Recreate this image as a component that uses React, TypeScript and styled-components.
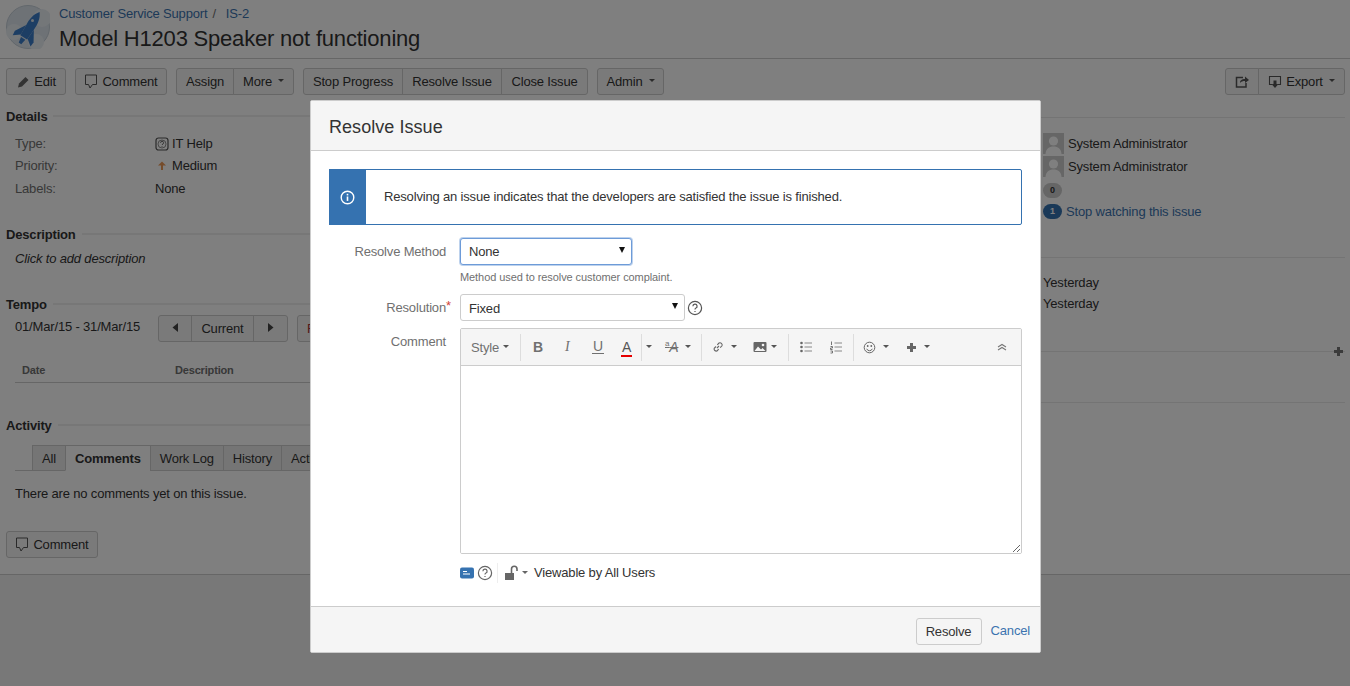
import React from "react";
import styled, { createGlobalStyle } from "styled-components";

const Global = createGlobalStyle`
  html, body { margin: 0; padding: 0; height: 686px; overflow: hidden; background: #fff; }
  body { font-family: "Liberation Sans", Arial, sans-serif; font-size: 13px; color: #333; letter-spacing: -0.17px; }
  * { box-sizing: border-box; }
  button, select, textarea { letter-spacing: inherit; }
`;

const Page = styled.div`position: relative; width: 1350px; height: 686px; overflow: hidden; background: #f0f0f0;`;
const Surface = styled.div`background: #fff; height: 575px; border-bottom: 1px solid #ccc;`;
const Header = styled.header`display: flex; align-items: flex-start; gap: 9px; height: 59px; padding: 5px 6px 0; border-bottom: 1px solid #ccc;`;
const HeaderText = styled.div`display: flex; flex-direction: column; min-width: 0;`;
const Crumbs = styled.div`display: flex; line-height: 17px; color: #707070;`;
const Crumb = styled.a`color: #3b73af;`;
const CrumbSep = styled.span`margin: 0 10px 0 5px;`;
const Title = styled.h1`margin: 2px 0 0; font-size: 22px; font-weight: 400; line-height: 30px; color: #333; letter-spacing: -0.2px;`;

const Toolbar = styled.div`display: flex; gap: 9px; padding: 9px 5px 0 6px;`;
const Spacer = styled.div`flex: 1;`;
const Group = styled.div`display: flex;`;
const Btn = styled.button<{ $w: number }>`
  display: flex; align-items: center; justify-content: center; gap: 4px;
  width: ${(p) => p.$w}px; height: 27px; padding: 0; margin-left: -1px; background: #f5f5f5; border: 1px solid #ccc;
  color: #333; font: 13px "Liberation Sans", sans-serif; white-space: nowrap;
  &:first-child { margin-left: 0; border-radius: 3px 0 0 3px; }
  &:last-child { border-radius: 0 3px 3px 0; }
  &:only-child { border-radius: 3px; }
`;
const Caret = styled.span`display: inline-block; width: 0; height: 0; margin-left: 2px; margin-top: -2px; border: 3px solid transparent; border-top-color: ${(p: { $c?: string }) => p.$c ?? "#555"}; border-bottom-width: 0;`;

const Columns = styled.div`display: grid; grid-template-columns: 1035px 315px;`;
const Main = styled.main`padding: 11px 0 0 6px; min-width: 0;`;
const Side = styled.aside`padding: 22px 5px 0 0;`;
const HeadRow = styled.div<{ $top?: number }>`display: flex; align-items: center; gap: 6px; height: 20px; margin-top: ${(p) => p.$top ?? 0}px;`;
const Heading = styled.h4`margin: 0; font-size: 13px; font-weight: 700; color: #333;`;
const HeadRule = styled.div`flex: 1; height: 2px; background: #eee;`;
const Rows = styled.dl`margin: 6.6px 0 0 9px; height: 67.9px;`;
const Row = styled.div`display: flex; height: 22.5px; line-height: 22px; color: #333;`;
const Term = styled.dt`width: 140px; color: #707070;`;
const Val = styled.dd`margin: 0; display: flex; align-items: center; gap: 3px;`;
const NoteLine = styled.div`margin: 7px 0 0 9px; font-style: italic; line-height: 16px;`;
const TempoRow = styled.div`display: flex; align-items: flex-start; margin: 1px 0 0 9px;`;
const DateText = styled.div`width: 143px; line-height: 22px; color: #333; margin-top: 1px;`;
const TempoNext = styled.button`margin-left: 9px; width: 90px; height: 27px; background: #f5f5f5; border: 1px solid #ccc; border-radius: 3px; color: #a33; font: 13px "Liberation Sans", sans-serif; text-align: left; padding-left: 9px;`;
const TableHead = styled.div`display: flex; margin: 14px 0 0 9px; padding-left: 7px; height: 27px; border-bottom: 1px solid #ccc; font-size: 11px; font-weight: 700; color: #707070; line-height: 28px;`;
const ColDate = styled.span`width: 153px;`;
const Tabs = styled.div`display: flex; align-items: flex-end; margin: 10px 0 0 9px; padding-left: 18px; height: 26px; border-bottom: 1px solid #ccc;`;
const Tab = styled.div<{ $on?: boolean }>`
  height: 26px; margin-bottom: -1px; padding: 0 9px; line-height: 26px; white-space: nowrap; border: 1px solid #ccc; margin-left: -1px;
  background: ${(p) => (p.$on ? "#fff" : "#ebebeb")}; font-weight: ${(p) => (p.$on ? 700 : 400)}; border-bottom-color: ${(p) => (p.$on ? "#fff" : "#ccc")};
`;
const Para = styled.p`margin: 14px 0 0 9px; line-height: 17px;`;
const BottomBtn = styled(Group)`margin-top: 29px;`;

const SideRule = styled.div<{ $top: number }>`height: 1px; background: #e8e8e8; margin-top: ${(p) => p.$top}px; position: relative;`;
const SideBody = styled.div`padding: 15px 0 0 8px;`;
const Person = styled.div`display: flex; align-items: center; gap: 4px; height: 21px; margin-bottom: 2px;`;
const BadgeRow = styled.div<{ $top: number }>`display: flex; align-items: center; gap: 4px; height: 15px; margin-top: ${(p) => p.$top}px;`;
const Badge = styled.span<{ $on?: boolean }>`
  display: inline-block; width: 19px; height: 15px; border-radius: 8px; text-align: center; font-size: 9px; font-weight: 700; line-height: 15px;
  background: ${(p) => (p.$on ? "#3572b0" : "#ccc")}; color: ${(p) => (p.$on ? "#fff" : "#333")};
`;
const SideLink = styled.a`color: #3b73af;`;
const DateList = styled.div`padding: 14px 0 0 8px;`;
const DateLine = styled.div`height: 21px; line-height: 21px;`;
const PlusMark = styled.span`position: absolute; right: 1px; top: -5px; display: flex;`;

const Overlay = styled.div`position: absolute; inset: 0; background: rgba(0, 0, 0, 0.5);`;
const Dialog = styled.div`position: absolute; left: 310px; top: 100px; width: 731px; height: 553px; display: flex; flex-direction: column; background: #fff; border: 1px solid #ccc; border-radius: 2px; overflow: hidden; color: #333;`;
const DialogHead = styled.div`height: 50px; flex: none; background: #f5f5f5; border-bottom: 1px solid #ccc; padding: 0 18px; display: flex; align-items: center;`;
const DialogTitle = styled.h2`margin: 0; font-size: 18px; font-weight: 400; color: #333; position: relative; top: 2px; letter-spacing: 0.05px;`;
const DialogBody = styled.div`flex: 1; padding: 18px 18px 0;`;
const Notice = styled.div`display: flex; align-items: stretch; height: 56px; border: 1px solid #3572b0; border-radius: 2px;`;
const NoticeIcon = styled.div`width: 37px; margin: -1px 0 -1px -1px; background: #3572b0; display: flex; align-items: center; justify-content: center;`;
const NoticeText = styled.div`margin-left: 18px; line-height: 54px;`;
const FormRow = styled.div<{ $top: number }>`display: grid; grid-template-columns: 117px 1fr; column-gap: 14px; margin-top: ${(p) => p.$top}px;`;
const Label = styled.label<{ $top: number }>`text-align: right; color: #707070; line-height: 17px; padding-top: ${(p) => p.$top}px; white-space: nowrap;`;
const ReqWrap = styled.span`position: relative;`;
const Req = styled.span`color: #d04437; font-size: 13px; line-height: 13px; position: absolute; left: 100%; top: -1px;`;
const SelectWrap = styled.span<{ $w: number }>`
  position: relative; display: block; width: ${(p) => p.$w}px; height: 27px;
  &::after { content: ""; position: absolute; right: 7px; top: 9px; border: 3.5px solid transparent; border-top: 6px solid #111; border-bottom-width: 0; pointer-events: none; }
`;
const Select = styled.select<{ $focus?: boolean }>`
  appearance: none; display: block; width: 100%; height: 27px; padding: ${(p) => (p.$focus ? "0 8px" : "1px 8px 0")}; background: #fff; color: #333; font: 13px "Liberation Sans", sans-serif; border-radius: 3px; outline: 0;
  border: 1px solid ${(p) => (p.$focus ? "#6d9bd8" : "#ccc")};
  box-shadow: ${(p) => (p.$focus ? "0 0 0 1px rgba(109,155,216,.45)" : "none")};
`;
const Hint = styled.div`font-size: 11px; color: #707070; margin-top: 6px; line-height: 13px; letter-spacing: -0.08px;`;
const FieldLine = styled.div`display: flex; align-items: center; gap: 2px;`;
const Editor = styled.div`border: 1px solid #ccc; border-radius: 2px; overflow: hidden; display: flex; flex-direction: column; height: 226px;`;
const EdTools = styled.div`height: 37px; flex: none; background: #f5f5f5; border-bottom: 1px solid #ccc; position: relative;`;
const EdSep = styled.span<{ $l: number }>`position: absolute; left: ${(p) => p.$l}px; top: 5px; width: 1px; height: 27px; background: #ddd;`;
const EdItem = styled.span<{ $l: number; $gap?: number }>`position: absolute; left: ${(p) => p.$l}px; top: 0; height: 36px; display: flex; align-items: center; gap: ${(p) => p.$gap ?? 5}px; color: #707070;`;
const EdBold = styled.span`font: 700 14px "Liberation Sans", sans-serif;`;
const EdItalic = styled.span`font: italic 14px "Liberation Serif", serif;`;
const EdUnder = styled.span`font: 14px "Liberation Sans", sans-serif; border-bottom: 1px solid #707070; line-height: 13px; padding: 0 1px;`;
const EdColor = styled.span`font: 14px "Liberation Sans", sans-serif; border-bottom: 2px solid #e60000; line-height: 15px; padding: 0 1px; margin-top: 2px; color: #555;`;
const EdSize = styled.span`font: italic 14px "Liberation Sans", sans-serif; text-decoration: line-through;`;
const EdSizeSmall = styled.sup`font: 8px "Liberation Sans", sans-serif;`;
const EdArea = styled.textarea`flex: 1; display: block; width: 100%; border: 0; outline: 0; padding: 8px; background: #fff; resize: both;`;
const Security = styled.div`display: flex; align-items: center; margin-top: 11px; height: 16px; line-height: 16px;`;
const SecGap = styled.span`width: 3px;`;
const SecDivider = styled.span`width: 1px; height: 20px; background: #eee; margin: 0 6px 0 4px;`;
const SecText = styled.span`margin-left: 6px;`;
const DialogFoot = styled.div`height: 46px; flex: none; background: #f5f5f5; border-top: 1px solid #ccc; display: flex; align-items: flex-start; justify-content: flex-end; padding: 11px 10px 0 0; gap: 9px;`;
const CancelLink = styled.a`color: #3b73af; line-height: 26px;`;

const Icon = ({ children, s = 14, w, h }: { children: React.ReactNode; s?: number; w?: number; h?: number }) => (
  <svg width={w ?? s} height={h ?? s} viewBox={`0 0 ${w ?? s} ${h ?? s}`} fill="none" style={{ flex: "none" }}>{children}</svg>
);

const Logo = () => (
  <svg width="44" height="44" viewBox="0 0 44 44" style={{ flex: "none" }}>
    <circle cx="22" cy="22" r="21.5" fill="#dde5ec" stroke="#c4ced8" />
    <circle cx="36" cy="13" r="9" fill="#e9eef3" />
    <circle cx="8" cy="27" r="8" fill="#e9eef3" />
    <circle cx="30" cy="37" r="8" fill="#e9eef3" />
    <g transform="rotate(32 23 24)" fill="#3b7dc8">
      <path d="M23 4 C27 9 28 15 27.5 22 L27 34 H19 L18.5 22 C18 15 19 9 23 4 Z" />
      <path d="M18.5 22 L12 33 L12.5 38 L19 33 Z" />
      <path d="M27.5 22 L34 33 L33.5 38 L27 33 Z" />
      <path d="M20.5 35 H25.5 L24.5 41 H21.5 Z" />
    </g>
    <circle cx="26.5" cy="15.5" r="1.5" fill="#dde5ec" />
  </svg>
);
const Pencil = () => (
  <Icon s={14}><path d="M2 12.5 L3 8.5 L9.5 2 L12.5 5 L6 11.5 Z" fill="#666" /></Icon>
);
const Bubble = ({ c = "#555" }: { c?: string }) => (
  <Icon w={14} h={16}><path d="M1.5 1 H12.5 V10.5 H8.5 L6 14 L4.5 10.5 H1.5 Z" stroke={c} strokeWidth="1" fill="none" strokeLinejoin="round" /></Icon>
);
const Share = () => (
  <Icon s={16}><path d="M9 3.5 H2.5 V13 H12 V9" stroke="#555" strokeWidth="1.5" /><path d="M6 9 C6 6 8 5 11 5 V2.5 L15 6 L11 9 V7 C9 7 7 7.5 6 9 Z" fill="#555" /></Icon>
);
const ExportIc = () => (
  <Icon s={14}><path d="M4 9.5 H1.5 V1.5 H12.5 V9.5 H10" stroke="#555" strokeWidth="1.1" /><path d="M5.5 5.5 H8.5 V9 H10.5 L7 13 L3.5 9 H5.5 Z" fill="#555" /></Icon>
);
const ItHelp = () => (
  <Icon s={14}><rect x="1" y="1" width="12" height="12" rx="2.5" stroke="#555" strokeWidth="1.2" /><circle cx="7" cy="7" r="4" stroke="#777" strokeWidth="0.8" /><path d="M5.6 5.8 A1.5 1.5 0 1 1 7.4 7.2 V8 M7 9.3 V10" stroke="#555" strokeWidth="0.9" /></Icon>
);
const Arrow = () => (
  <Icon s={14}><path d="M7 2.5 L11 6.5 H8 V11 H6 V6.5 H3 Z" fill="#e8863a" fillOpacity="0.85" /></Icon>
);
const Avatar = () => (
  <svg width="21" height="21" viewBox="0 0 21 21" style={{ flex: "none" }}>
    <rect width="21" height="21" fill="#ccc" />
    <circle cx="10.5" cy="8" r="4.6" fill="#fff" />
    <path d="M2.5 21 C3 15.5 6 13.5 10.5 13.5 C15 13.5 18 15.5 18.5 21 Z" fill="#fff" />
  </svg>
);
const Help = ({ c = "#555" }: { c?: string }) => (
  <Icon s={16}><circle cx="8" cy="8" r="6.6" stroke={c} strokeWidth="1.2" /><path d="M5.9 6.3 A2.1 2.1 0 1 1 8.6 8.3 Q8 8.6 8 9.6 M8 10.9 V12" stroke={c} strokeWidth="1.2" /></Icon>
);
const Plus = ({ c = "#777" }: { c?: string }) => (
  <Icon s={11}><path d="M4 1 H7 V4 H10 V7 H7 V10 H4 V7 H1 V4 H4 Z" fill={c} /></Icon>
);
const Tri = ({ dir }: { dir: "l" | "r" }) => (
  <Icon w={6} h={12}><path d={dir === "l" ? "M6 0 V9 L0.5 4.5 Z" : "M0 0 V9 L5.5 4.5 Z"} fill="#444" /></Icon>
);

export default function App() {
  return (
    <Page>
      <Global />
      <Surface>
        <Header>
          <Logo />
          <HeaderText>
            <Crumbs>
              <Crumb>Customer Service Support</Crumb>
              <CrumbSep>/</CrumbSep>
              <Crumb>IS-2</Crumb>
            </Crumbs>
            <Title>Model H1203 Speaker not functioning</Title>
          </HeaderText>
        </Header>
        <Toolbar>
          <Group><Btn $w={60}><Pencil />Edit</Btn></Group>
          <Group><Btn $w={92}><Bubble />Comment</Btn></Group>
          <Group><Btn $w={58}>Assign</Btn><Btn $w={61}>More <Caret /></Btn></Group>
          <Group><Btn $w={100}>Stop Progress</Btn><Btn $w={100}>Resolve Issue</Btn><Btn $w={87}>Close Issue</Btn></Group>
          <Group><Btn $w={67}>Admin <Caret /></Btn></Group>
          <Spacer />
          <Group><Btn $w={34}><Share /></Btn><Btn $w={87}><ExportIc />Export <Caret /></Btn></Group>
        </Toolbar>
        <Columns>
          <Main>
            <HeadRow><Heading>Details</Heading><HeadRule /></HeadRow>
            <Rows>
              <Row><Term>Type:</Term><Val><ItHelp />IT Help</Val></Row>
              <Row><Term>Priority:</Term><Val><Arrow />Medium</Val></Row>
              <Row><Term>Labels:</Term><Val>None</Val></Row>
            </Rows>
            <HeadRow $top={24}><Heading>Description</Heading><HeadRule /></HeadRow>
            <NoteLine>Click to add description</NoteLine>
            <HeadRow $top={27}><Heading>Tempo</Heading><HeadRule /></HeadRow>
            <TempoRow>
              <DateText>01/Mar/15 - 31/Mar/15</DateText>
              <Group>
                <Btn $w={34}><Tri dir="l" /></Btn>
                <Btn $w={63}>Current</Btn>
                <Btn $w={35}><Tri dir="r" /></Btn>
              </Group>
              <TempoNext>Filter</TempoNext>
            </TempoRow>
            <TableHead><ColDate>Date</ColDate><span>Description</span></TableHead>
            <HeadRow $top={32}><Heading>Activity</Heading><HeadRule /></HeadRow>
            <Tabs>
              <Tab>All</Tab>
              <Tab $on>Comments</Tab>
              <Tab>Work Log</Tab>
              <Tab>History</Tab>
              <Tab>Activity Stream</Tab>
            </Tabs>
            <Para>There are no comments yet on this issue.</Para>
            <BottomBtn><Btn $w={92}><Bubble />Comment</Btn></BottomBtn>
          </Main>
          <Side>
            <SideRule $top={0} />
            <SideBody>
              <Person><Avatar />System Administrator</Person>
              <Person><Avatar />System Administrator</Person>
              <BadgeRow $top={6}><Badge>0</Badge></BadgeRow>
              <BadgeRow $top={6}><Badge $on>1</Badge><SideLink>Stop watching this issue</SideLink></BadgeRow>
            </SideBody>
            <SideRule $top={38} />
            <DateList>
              <DateLine>Yesterday</DateLine>
              <DateLine>Yesterday</DateLine>
            </DateList>
            <SideRule $top={37}><PlusMark><Plus /></PlusMark></SideRule>
            <SideRule $top={50} />
          </Side>
        </Columns>
      </Surface>
      <Overlay />
      <Dialog>
        <DialogHead><DialogTitle>Resolve Issue</DialogTitle></DialogHead>
        <DialogBody>
          <Notice>
            <NoticeIcon>
              <Icon s={15}><circle cx="7.5" cy="7.5" r="6.3" stroke="#fff" strokeWidth="1.4" /><rect x="6.7" y="6.5" width="1.6" height="4.4" fill="#fff" /><rect x="6.7" y="3.8" width="1.6" height="1.6" fill="#fff" /></Icon>
            </NoticeIcon>
            <NoticeText>Resolving an issue indicates that the developers are satisfied the issue is finished.</NoticeText>
          </Notice>
          <FormRow $top={13}>
            <Label $top={5}>Resolve Method</Label>
            <div>
              <SelectWrap $w={172}>
                <Select $focus defaultValue="None"><option>None</option></Select>
              </SelectWrap>
              <Hint>Method used to resolve customer complaint.</Hint>
            </div>
          </FormRow>
          <FormRow $top={10}>
            <Label $top={5}><ReqWrap>Resolution<Req>*</Req></ReqWrap></Label>
            <FieldLine>
              <SelectWrap $w={225}>
                <Select defaultValue="Fixed"><option>Fixed</option></Select>
              </SelectWrap>
              <Help />
            </FieldLine>
          </FormRow>
          <FormRow $top={7}>
            <Label $top={5}>Comment</Label>
            <div>
              <Editor>
                <EdTools>
                  <EdItem $l={10} $gap={2}>Style<Caret /></EdItem>
                  <EdSep $l={59} />
                  <EdItem $l={72}><EdBold>B</EdBold></EdItem>
                  <EdItem $l={104}><EdItalic>I</EdItalic></EdItem>
                  <EdItem $l={131}><EdUnder>U</EdUnder></EdItem>
                  <EdItem $l={160}><EdColor>A</EdColor></EdItem>
                  <EdSep $l={180} />
                  <EdItem $l={183}><Caret /></EdItem>
                  <EdItem $l={204}><EdSize><EdSizeSmall>a</EdSizeSmall>A</EdSize><Caret /></EdItem>
                  <EdSep $l={240} />
                  <EdItem $l={251}>
                    <Icon s={12}><path d="M5 7 L7 5 M4 5.5 L2.2 7.3 A2.2 2.2 0 0 0 5 10 L6.7 8.2 M5.3 3.8 L7 2 A2.2 2.2 0 0 1 10 4.8 L8.2 6.6" stroke="#666" strokeWidth="1.1" /></Icon>
                    <Caret />
                  </EdItem>
                  <EdItem $l={292} $gap={2}>
                    <Icon s={14}><rect x="0.5" y="2" width="13" height="10" rx="1" fill="#666" /><circle cx="10" cy="5" r="1.3" fill="#f5f5f5" /><path d="M1.5 11 L5 6.5 L8 9.5 L9.5 8 L12.5 11 Z" fill="#f5f5f5" /></Icon>
                    <Caret />
                  </EdItem>
                  <EdSep $l={327} />
                  <EdItem $l={338}>
                    <Icon s={14}><circle cx="2.5" cy="3" r="1.3" fill="#666" /><circle cx="2.5" cy="7" r="1.3" fill="#666" /><circle cx="2.5" cy="11" r="1.3" fill="#666" /><path d="M5.5 3 H13 M5.5 7 H13 M5.5 11 H13" stroke="#888" /></Icon>
                  </EdItem>
                  <EdItem $l={368}>
                    <Icon s={14}><path d="M2.5 1.5 V5 M1.5 6.5 H3.5 V8 H1.5 V9.5 H3.5 M1.5 11 H3.5 V13 H1.5" stroke="#666" strokeWidth="0.9" /><path d="M5.5 3 H13 M5.5 7 H13 M5.5 11 H13" stroke="#888" /></Icon>
                  </EdItem>
                  <EdSep $l={392} />
                  <EdItem $l={402}>
                    <Icon s={13}><circle cx="6.5" cy="6.5" r="5.3" stroke="#666" /><circle cx="4.7" cy="5" r="0.9" fill="#666" /><circle cx="8.3" cy="5" r="0.9" fill="#666" /><path d="M3.7 7.8 A3 3 0 0 0 9.3 7.8" stroke="#666" /></Icon>
                    <Caret />
                  </EdItem>
                  <EdItem $l={445}><Plus c="#666" /><Caret /></EdItem>
                  <EdItem $l={535}>
                    <Icon s={12}><path d="M2 6 L6 3.5 L10 6 M2 9 L6 6.5 L10 9" stroke="#777" strokeWidth="1.1" /></Icon>
                  </EdItem>
                </EdTools>
                <EdArea />
              </Editor>
              <Security>
                <Icon s={14}><rect x="0" y="1.5" width="14" height="11" rx="2" fill="#3572b0" /><path d="M3 5.5 H7 M3 8 H10" stroke="#fff" /></Icon>
                <SecGap />
                <Help c="#666" />
                <SecDivider />
                <Icon s={16}><rect x="1" y="8" width="9" height="7" fill="#666" /><path d="M7.5 8 V4 A2.7 2.7 0 0 1 13 4 V6" stroke="#666" strokeWidth="1.6" /></Icon>
                <Caret $c="#666" />
                <SecText>Viewable by All Users</SecText>
              </Security>
            </div>
          </FormRow>
        </DialogBody>
        <DialogFoot>
          <Group><Btn $w={66}>Resolve</Btn></Group>
          <CancelLink>Cancel</CancelLink>
        </DialogFoot>
      </Dialog>
    </Page>
  );
}
